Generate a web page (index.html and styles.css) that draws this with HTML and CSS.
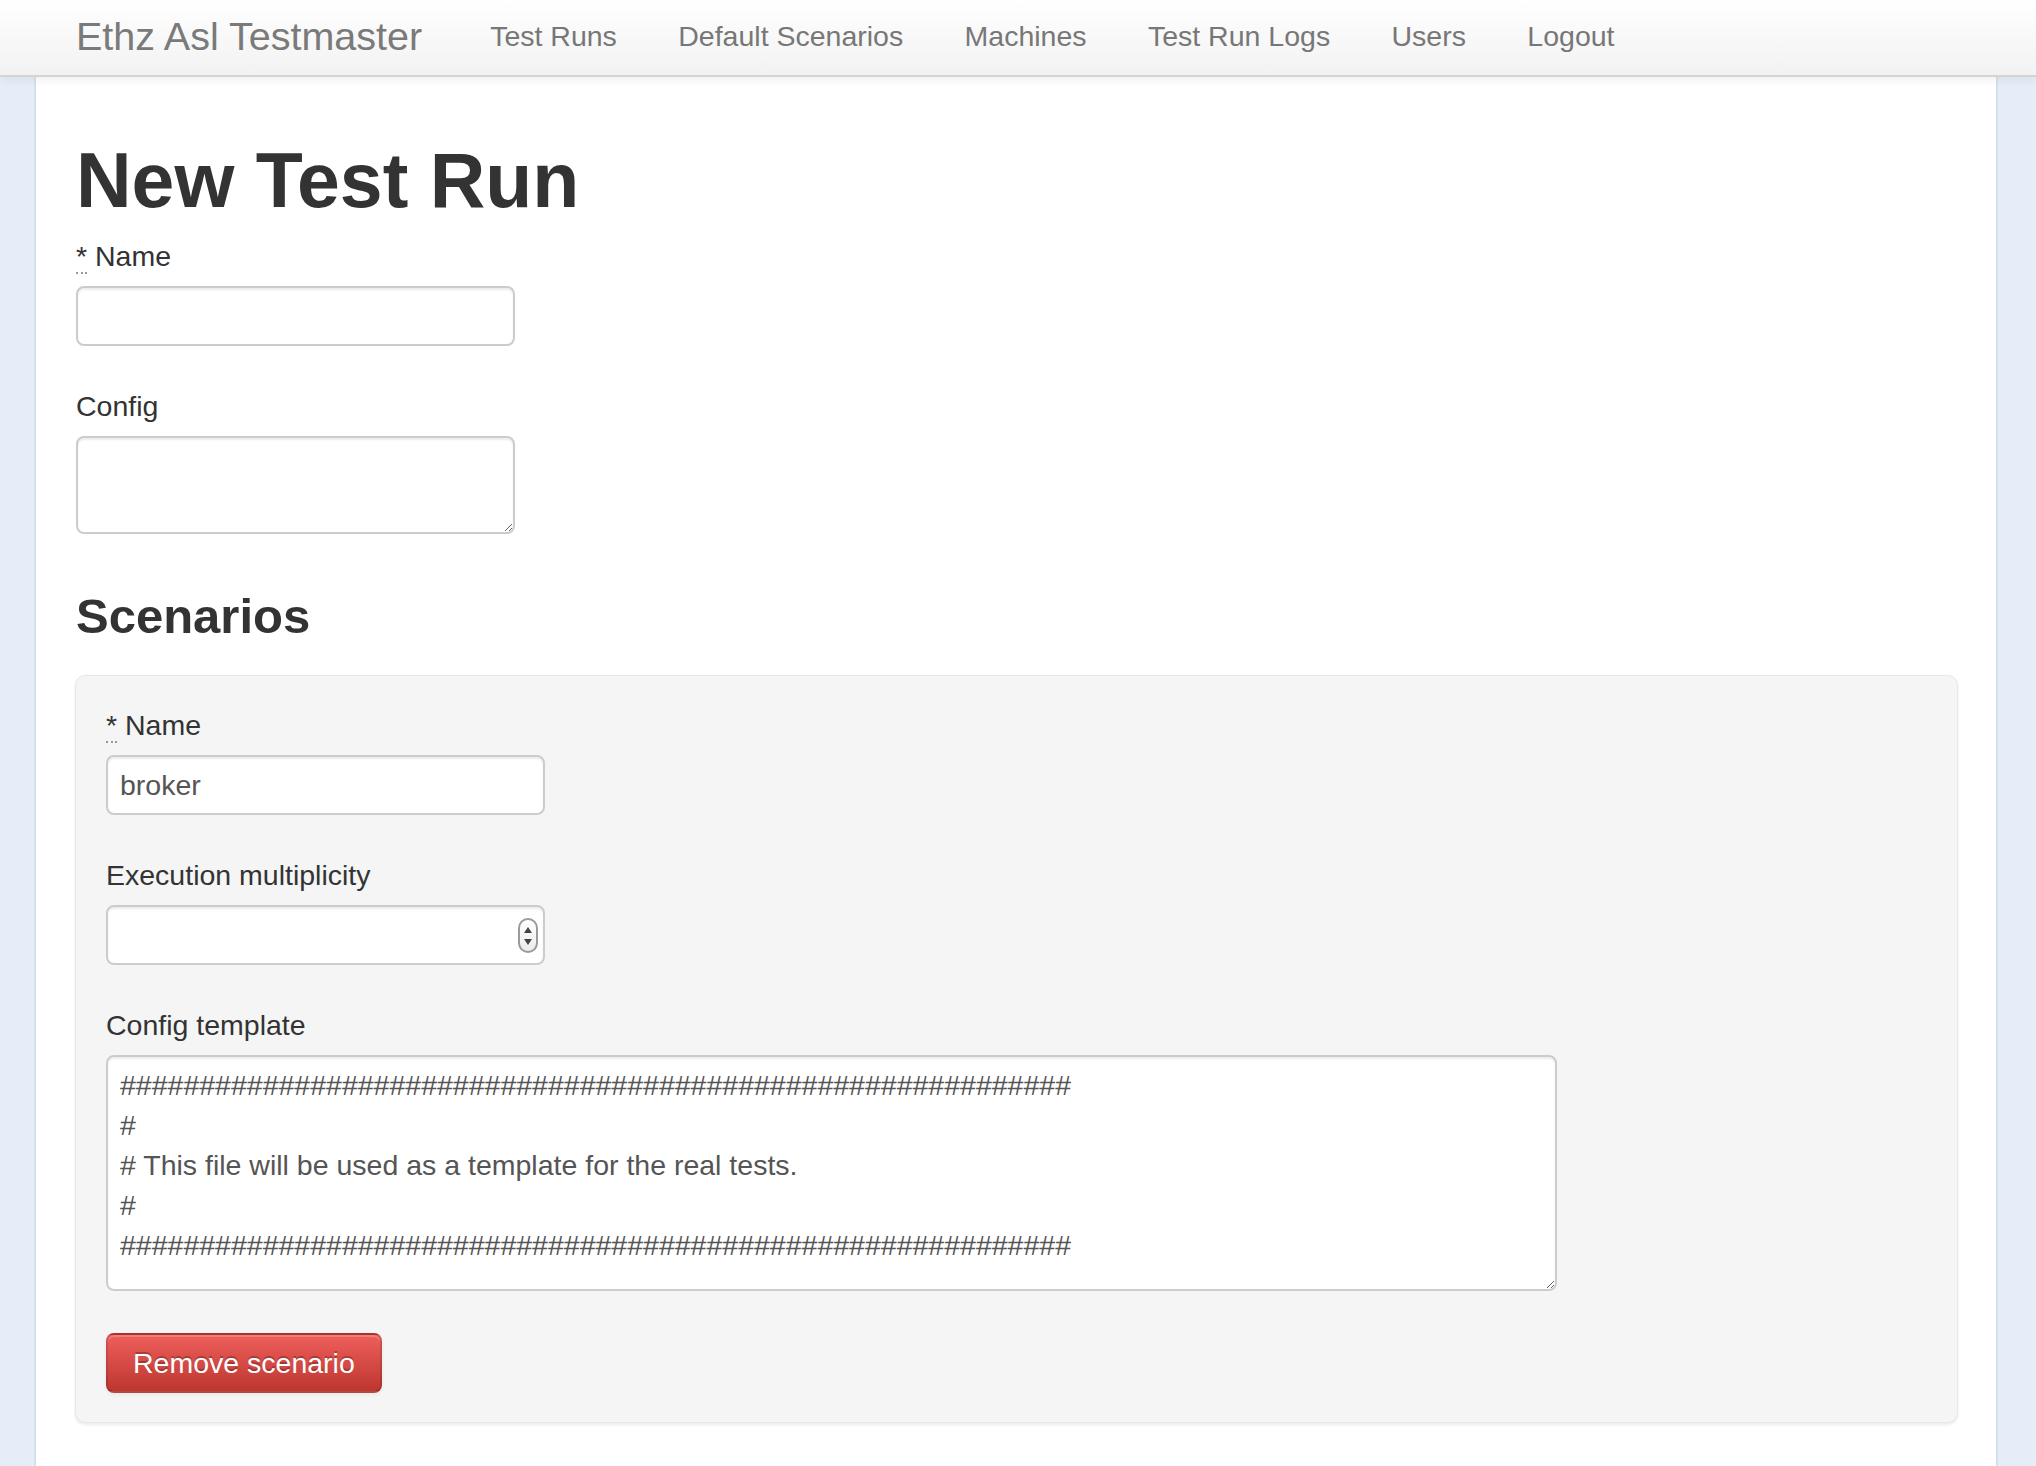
FILE: index.html
```html
<!DOCTYPE html>
<html lang="en">
<head>
<meta charset="utf-8">
<title>New Test Run - Ethz Asl Testmaster</title>
<link rel="stylesheet" href="styles.css">
</head>
<body>
<header class="navbar">
  <div class="navbar-inner">
    <a class="brand" href="#">Ethz Asl Testmaster</a>
    <nav class="nav">
      <a class="nav-link" href="#">Test Runs</a>
      <a class="nav-link" href="#">Default Scenarios</a>
      <a class="nav-link" href="#">Machines</a>
      <a class="nav-link" href="#">Test Run Logs</a>
      <a class="nav-link" href="#">Users</a>
      <a class="nav-link" href="#">Logout</a>
    </nav>
  </div>
</header>
<main class="page">
  <h1 class="title">New Test Run</h1>
  <form class="form">
    <label class="label" for="run-name"><abbr class="req" title="required">*</abbr> Name</label>
    <input class="input" id="run-name" type="text">

    <label class="label" for="run-config">Config</label>
    <textarea class="input textarea textarea-config" id="run-config"></textarea>

    <h3 class="section-title">Scenarios</h3>
    <div class="well">
      <label class="label" for="sc-name"><abbr class="req" title="required">*</abbr> Name</label>
      <input class="input" id="sc-name" type="text" value="broker">

      <label class="label" for="sc-mult">Execution multiplicity</label>
      <div class="number-wrap">
        <input class="input input-number" id="sc-mult" type="text">
        <span class="spinner"><span class="arrow-up"></span><span class="arrow-down"></span></span>
      </div>

      <label class="label" for="sc-tpl">Config template</label>
      <textarea class="input textarea textarea-template" id="sc-tpl">############################################################
#
# This file will be used as a template for the real tests.
#
############################################################</textarea>

      <button class="btn btn-danger" type="button">Remove scenario</button>
    </div>
  </form>
</main>
</body>
</html>
```

FILE: styles.css
```css
html, body {
  margin: 0;
  padding: 0;
}

body {
  background: #e5eef8;
  font-family: "Liberation Sans", Arial, Helvetica, sans-serif;
  font-size: 28.5px;
  line-height: 40px;
  color: #333;
}

/* ---------- navbar ---------- */
.navbar {
  position: relative;
  z-index: 2;
  height: 75px;
  background: linear-gradient(to bottom, #ffffff, #f2f2f2);
  border-bottom: 2px solid #d4d4d4;
  box-shadow: 0 2px 10px rgba(0, 0, 0, 0.07);
}

.navbar-inner {
  display: flex;
  align-items: center;
  height: 72px;
  padding-left: 76px;
}

.brand {
  font-size: 39.5px;
  line-height: 40px;
  color: #7a7a7a;
  text-decoration: none;
  padding-right: 38px;
}

.nav {
  display: flex;
  align-items: center;
}

.nav-link {
  font-size: 28.5px;
  line-height: 40px;
  color: #777;
  text-decoration: none;
  padding: 0 30.7px;
}

.nav-link:first-child {
  padding-left: 30px;
}

/* ---------- page panel ---------- */
.page {
  margin: 0 38px 0 34px;
  min-height: calc(100vh - 77px);
  box-sizing: border-box;
  background: #fff;
  border-left: 2px solid #d5e1ec;
  border-right: 2px solid #d5e1ec;
  padding: 63px 38px 0 40px;
}

.title {
  margin: 0 0 16px 0;
  font-size: 77px;
  line-height: 80px;
  font-weight: bold;
  color: #333;
}

.form {
  margin: 0;
}

.label {
  display: block;
  height: 40px;
  line-height: 40px;
  margin-bottom: 10px;
  color: #333;
}

.req {
  text-decoration: none;
  border-bottom: 2px dotted #999;
  cursor: help;
}

.input {
  display: block;
  box-sizing: border-box;
  width: 439px;
  height: 60px;
  margin: 0 0 40px 0;
  padding: 0 12px;
  font-family: "Liberation Sans", Arial, Helvetica, sans-serif;
  font-size: 28.5px;
  line-height: 40px;
  color: #555;
  background: #fff;
  border: 2px solid #ccc;
  border-radius: 8px;
  box-shadow: inset 0 2px 2px rgba(0, 0, 0, 0.075);
  outline: none;
}

.textarea {
  padding: 8px 12px;
  overflow: hidden;
  white-space: pre;
}

.textarea-config {
  height: 98px;
  margin-bottom: 42px;
}

.textarea-template {
  width: 1451px;
  height: 236px;
  margin-bottom: 42px;
}

.section-title {
  margin: 0 0 19px 0;
  font-size: 49px;
  line-height: 80px;
  font-weight: bold;
  color: #333;
}

/* ---------- well ---------- */
.well {
  margin-left: -1px;
  padding: 29px 30px 29px 30px;
  background: #f5f5f5;
  border: 1px solid #e8e8e8;
  border-radius: 10px;
  box-shadow: 0 2px 3px rgba(0, 0, 0, 0.08);
}

/* ---------- number input ---------- */
.number-wrap {
  position: relative;
  width: 439px;
  margin-bottom: 40px;
}

.input-number {
  margin-bottom: 0;
}

.spinner {
  position: absolute;
  top: 13px;
  right: 7px;
  width: 20px;
  height: 35px;
  box-sizing: border-box;
  border: 2px solid #9a9a9a;
  border-radius: 10px;
  background: linear-gradient(to bottom, #ffffff, #ececec);
  display: flex;
  flex-direction: column;
  align-items: center;
  justify-content: center;
  gap: 6px;
}

.arrow-up {
  width: 0;
  height: 0;
  border-left: 4px solid transparent;
  border-right: 4px solid transparent;
  border-bottom: 6px solid #444;
}

.arrow-down {
  width: 0;
  height: 0;
  border-left: 4px solid transparent;
  border-right: 4px solid transparent;
  border-top: 6px solid #444;
}

/* ---------- button ---------- */
.btn {
  display: inline-block;
  box-sizing: border-box;
  height: 60px;
  padding: 0 25px;
  font-family: "Liberation Sans", Arial, Helvetica, sans-serif;
  font-size: 28.5px;
  line-height: 56px;
  border-radius: 8px;
  cursor: pointer;
}

.btn-danger {
  color: #fff;
  text-shadow: 0 -2px 0 rgba(0, 0, 0, 0.25);
  background: linear-gradient(to bottom, #ee5f5b, #bd362f);
  border: 2px solid;
  border-color: rgba(0, 0, 0, 0.1) rgba(0, 0, 0, 0.1) rgba(0, 0, 0, 0.25);
  box-shadow: inset 0 2px 0 rgba(255, 255, 255, 0.2), 0 2px 4px rgba(0, 0, 0, 0.05);
}
```
